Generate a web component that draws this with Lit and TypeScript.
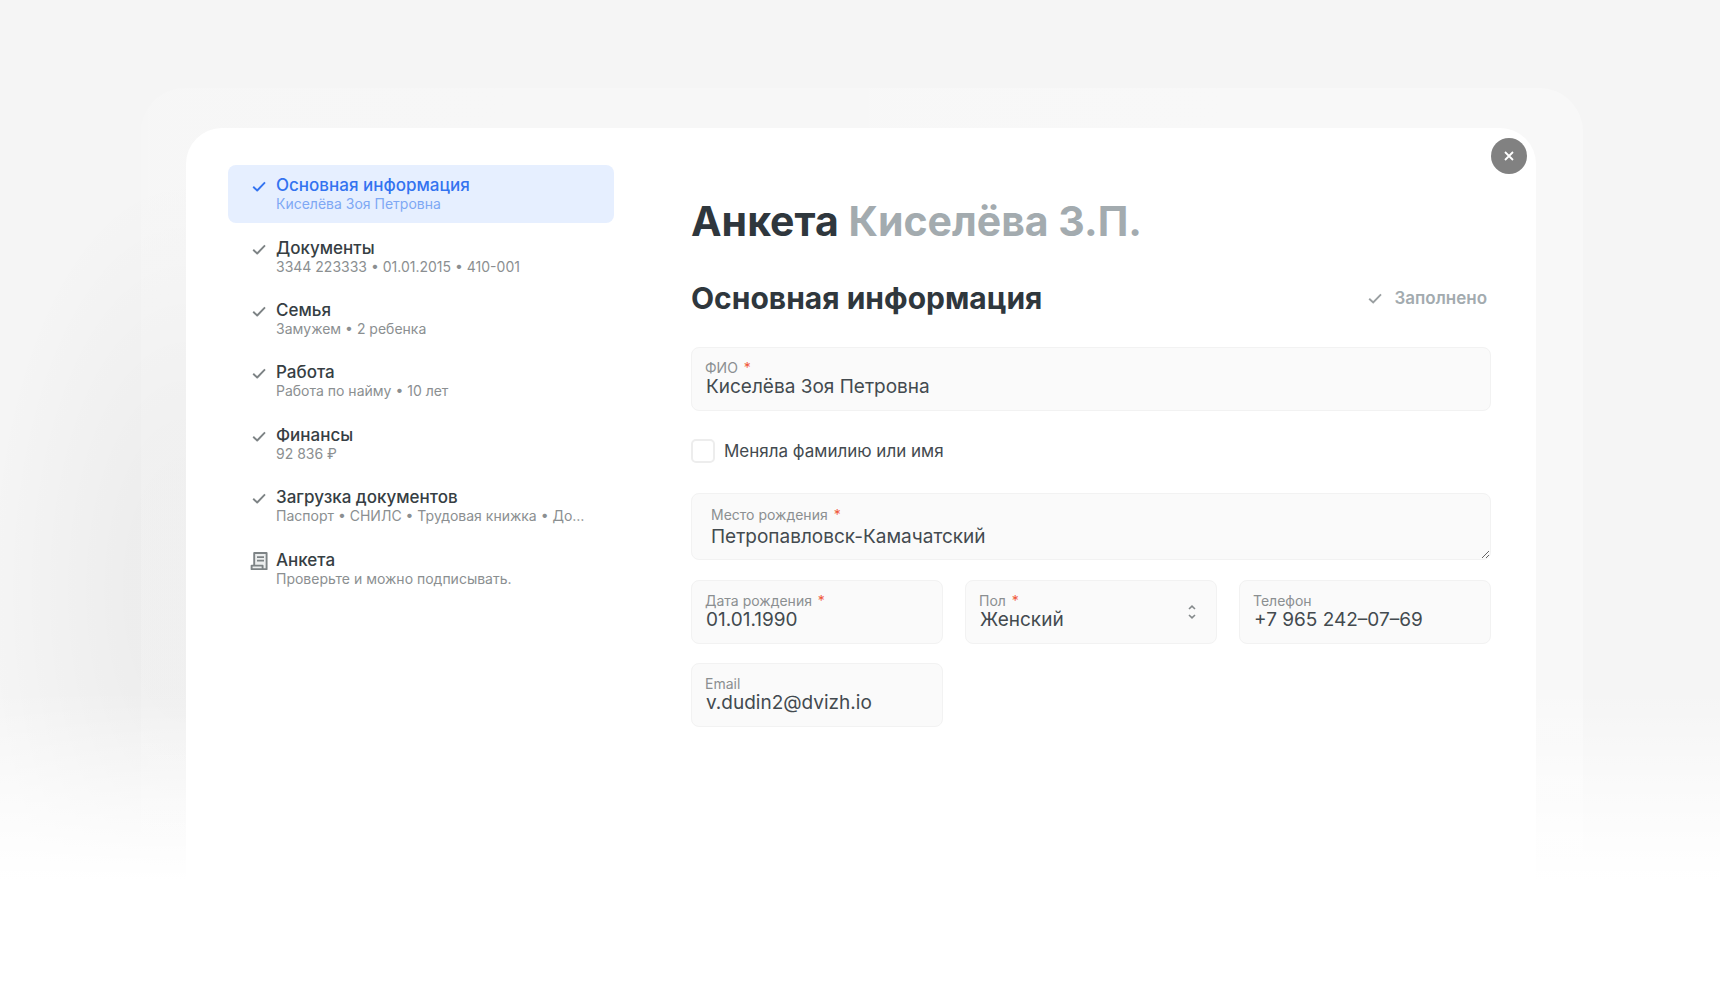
import { LitElement, html, css, svg, nothing } from "lit";
import { customElement, property, state } from "lit/decorators.js";
import { classMap } from "lit/directives/class-map.js";

interface Step {
  title: string;
  note: string;
  icon: "check" | "sheet";
}

const STEPS: Step[] = [
  { title: "Основная информация", note: "Киселёва Зоя Петровна", icon: "check" },
  { title: "Документы", note: "3344 223333 • 01.01.2015 • 410-001", icon: "check" },
  { title: "Семья", note: "Замужем • 2 ребенка", icon: "check" },
  { title: "Работа", note: "Работа по найму • 10 лет", icon: "check" },
  { title: "Финансы", note: "92 836 ₽", icon: "check" },
  { title: "Загрузка документов", note: "Паспорт • СНИЛС • Трудовая книжка • До…", icon: "check" },
  { title: "Анкета", note: "Проверьте и можно подписывать.", icon: "sheet" },
];

const checkShape = svg`<path d="M3.2 9.8 7.2 13.5 15 5.4" stroke-width="1.9" />`;
const sheetShape = svg`
  <path d="M4.2 13V1h12.4v16.2H1.6v-3.6h11v3.2" fill="#eceeee" stroke-width="1.9" />
  <path d="M7 5.2h7M7 8.6h7" stroke-width="1.7" />`;

@customElement("step-list")
export class StepList extends LitElement {
  @state() private current = 0;

  static styles = css`
    :host {
      display: block;
    }
    .steps {
      display: grid;
      grid-auto-rows: 1fr;
      gap: 4px;
      min-height: 433px;
      margin: 0;
      padding: 0;
      list-style: none;
    }
    .item {
      display: grid;
    }
    .step {
      display: grid;
      grid-template-columns: 18px minmax(0, 1fr);
      column-gap: 8px;
      align-content: center;
      padding: 0 24px 0 22px;
      border-radius: 8px;
      color: #363e43;
      text-decoration: none;
    }
    .icon {
      width: 18px;
      height: 18px;
      margin-top: 2px;
      fill: none;
      stroke: #7d8385;
      stroke-linejoin: round;
    }
    .title {
      font-size: 17px;
      font-weight: 500;
      line-height: 20px;
    }
    .note {
      grid-column: 2;
      overflow: hidden;
      color: #8b8f91;
      font-size: 14px;
      line-height: 18px;
      text-overflow: ellipsis;
      white-space: nowrap;
    }
    .active {
      background: #e6efff;
      color: #3373f0;
    }
    .active .icon {
      stroke: #3373f0;
    }
    .active .note {
      color: #7ea8f4;
    }
  `;

  render() {
    return html`<nav aria-label="Разделы анкеты">
      <ul class="steps">
        ${STEPS.map(
          (step, i) => html`<li class="item">
            <a
              href="#"
              class=${classMap({ step: true, active: i === this.current })}
              aria-current=${i === this.current ? "step" : nothing}
              @click=${(e: Event) => {
                e.preventDefault();
                this.current = i;
              }}
            >
              <svg class="icon" viewBox="0 0 18 18" aria-hidden="true">
                ${step.icon === "check" ? checkShape : sheetShape}
              </svg>
              <span class="title">${step.title}</span>
              <span class="note">${step.note}</span>
            </a>
          </li>`
        )}
      </ul>
    </nav>`;
  }
}

@customElement("form-field")
export class FormField extends LitElement {
  @property() label = "";
  @property() value = "";
  @property() kind = "text";
  @property({ type: Boolean }) required = false;
  @property({ type: Array }) options: string[] = [];

  static styles = css`
    :host {
      display: block;
      min-width: 0;
    }
    .field {
      display: grid;
    }
    .label,
    .control,
    .arrows {
      grid-area: 1 / 1;
    }
    .label {
      z-index: 1;
      justify-self: start;
      align-self: start;
      padding: 13px 14px 0;
      color: #8b8f91;
      font-size: 14px;
      line-height: 16px;
      pointer-events: none;
    }
    .star {
      margin-left: 2px;
      color: #f0583a;
    }
    .control {
      box-sizing: border-box;
      width: 100%;
      min-width: 0;
      margin: 0;
      padding: 28px 14px 12px;
      border: 1px solid #f2f2f2;
      border-radius: 8px;
      outline: none;
      background: #fafafa;
      color: #434a4f;
      font-family: inherit;
      font-size: 19px;
      line-height: 22px;
      appearance: none;
    }
    .control:focus {
      border-color: #2f6fec;
    }
    .area {
      display: block;
      height: 67px;
      padding: 32px 19px 11px;
      overflow: hidden;
      resize: vertical;
    }
    .area-label {
      padding: 14px 20px 0;
    }
    .arrows {
      z-index: 1;
      justify-self: end;
      align-self: center;
      width: 8px;
      height: 16px;
      margin-right: 21px;
      fill: none;
      stroke: #84898b;
      stroke-width: 1.6;
      pointer-events: none;
    }
  `;

  private control() {
    if (this.kind === "area")
      return html`<textarea id="control" class="control area" rows="1" .value=${this.value}></textarea>`;
    if (this.kind === "select")
      return html`<select id="control" class="control">
          ${this.options.map((o) => html`<option ?selected=${o === this.value}>${o}</option>`)}
        </select>
        <svg class="arrows" viewBox="0 0 8 16" aria-hidden="true">
          <path d="M1 5 4 2.2 7 5M1 11 4 13.8 7 11" />
        </svg>`;
    return html`<input id="control" class="control" type=${this.kind} .value=${this.value} />`;
  }

  render() {
    return html`<div class="field">
      <label class=${classMap({ label: true, "area-label": this.kind === "area" })} for="control"
        >${this.label} ${this.required ? html`<span class="star">*</span>` : nothing}</label
      >
      ${this.control()}
    </div>`;
  }
}

@customElement("app-root")
export class AppRoot extends LitElement {
  static styles = css`
    :host {
      display: flex;
      box-sizing: border-box;
      min-height: 100vh;
      padding: 88px 137px 0 141px;
      background:
        linear-gradient(rgba(255, 255, 255, 0) 690px, #fff 880px),
        radial-gradient(200px 420px at 186px 590px, rgba(0, 0, 0, 0.03) 30%, rgba(0, 0, 0, 0)),
        #f5f5f5;
      font-family: Inter, "Noto Sans", sans-serif;
    }
    .backdrop {
      display: flex;
      flex: 1;
      min-width: 0;
      padding: 40px 47px 0 45px;
      border-radius: 44px 44px 0 0;
      background: linear-gradient(to right, rgba(255, 255, 255, 0.15), rgba(255, 255, 255, 0.35));
    }
    .panel {
      position: relative;
      display: flex;
      flex: 1;
      gap: 77px;
      min-width: 0;
      padding: 37px 45px 60px 42px;
      border-radius: 36px 36px 0 0;
      background: #fff;
    }
    .side {
      flex: 0 0 386px;
    }
    .main {
      flex: 1;
      min-width: 0;
      padding-top: 28px;
    }
    .close {
      position: absolute;
      top: 10px;
      right: 9px;
      display: grid;
      place-items: center;
      width: 36px;
      height: 36px;
      padding: 0;
      border: 0;
      border-radius: 50%;
      background: #818181;
      cursor: pointer;
    }
    .close-icon {
      width: 10px;
      height: 10px;
      fill: none;
      stroke: #fff;
      stroke-width: 1.8;
    }
    .heading {
      margin: 0;
      color: #2f373d;
      font-size: 41px;
      font-weight: 700;
      line-height: 56px;
    }
    .person {
      color: #a3abaf;
    }
    .section {
      display: flex;
      align-items: center;
      justify-content: space-between;
      margin: 29px 0;
    }
    .subheading {
      margin: 0;
      color: #2f373d;
      font-size: 30px;
      font-weight: 700;
      line-height: 40px;
    }
    .status {
      display: flex;
      align-items: center;
      gap: 10px;
      padding-right: 4px;
      color: #a3abaf;
      font-size: 17px;
      font-weight: 600;
      line-height: 20px;
    }
    .status-icon {
      width: 18px;
      height: 18px;
      fill: none;
      stroke: #9a9fa1;
    }
    .form {
      display: flex;
      flex-direction: column;
      gap: 20px;
    }
    .toggle {
      display: flex;
      align-items: center;
      gap: 9px;
      margin: 8px 0 10px;
      color: #434a4f;
      font-size: 17px;
      line-height: 24px;
    }
    .box {
      box-sizing: border-box;
      width: 24px;
      height: 24px;
      margin: 0;
      border: 2px solid #ededed;
      border-radius: 5px;
      background: #fff;
      appearance: none;
    }
    .box:checked {
      border-color: #2f6fec;
      background: #2f6fec;
    }
    .row {
      display: grid;
      grid-template-columns: repeat(3, minmax(0, 1fr));
      gap: 19px 22px;
    }
  `;

  render() {
    return html`<div class="backdrop">
      <div class="panel">
        <step-list class="side"></step-list>
        <main class="main">
          <h1 class="heading">Анкета <span class="person">Киселёва З.П.</span></h1>
          <div class="section">
            <h2 class="subheading">Основная информация</h2>
            <span class="status">
              <svg class="status-icon" viewBox="0 0 18 18" aria-hidden="true">${checkShape}</svg>
              Заполнено
            </span>
          </div>
          <form class="form">
            <form-field label="ФИО" value="Киселёва Зоя Петровна" required></form-field>
            <label class="toggle"><input class="box" type="checkbox" />Меняла фамилию или имя</label>
            <form-field kind="area" label="Место рождения" value="Петропавловск-Камачатский" required></form-field>
            <div class="row">
              <form-field label="Дата рождения" value="01.01.1990" required></form-field>
              <form-field
                kind="select"
                label="Пол"
                value="Женский"
                .options=${["Женский", "Мужской"]}
                required
              ></form-field>
              <form-field kind="tel" label="Телефон" value="+7 965 242–07–69"></form-field>
              <form-field kind="email" label="Email" value="v.dudin2@dvizh.io"></form-field>
            </div>
          </form>
        </main>
        <button class="close" type="button" aria-label="Закрыть">
          <svg class="close-icon" viewBox="0 0 10 10" aria-hidden="true"><path d="M1 1 9 9M9 1 1 9" /></svg>
        </button>
      </div>
    </div>`;
  }
}
